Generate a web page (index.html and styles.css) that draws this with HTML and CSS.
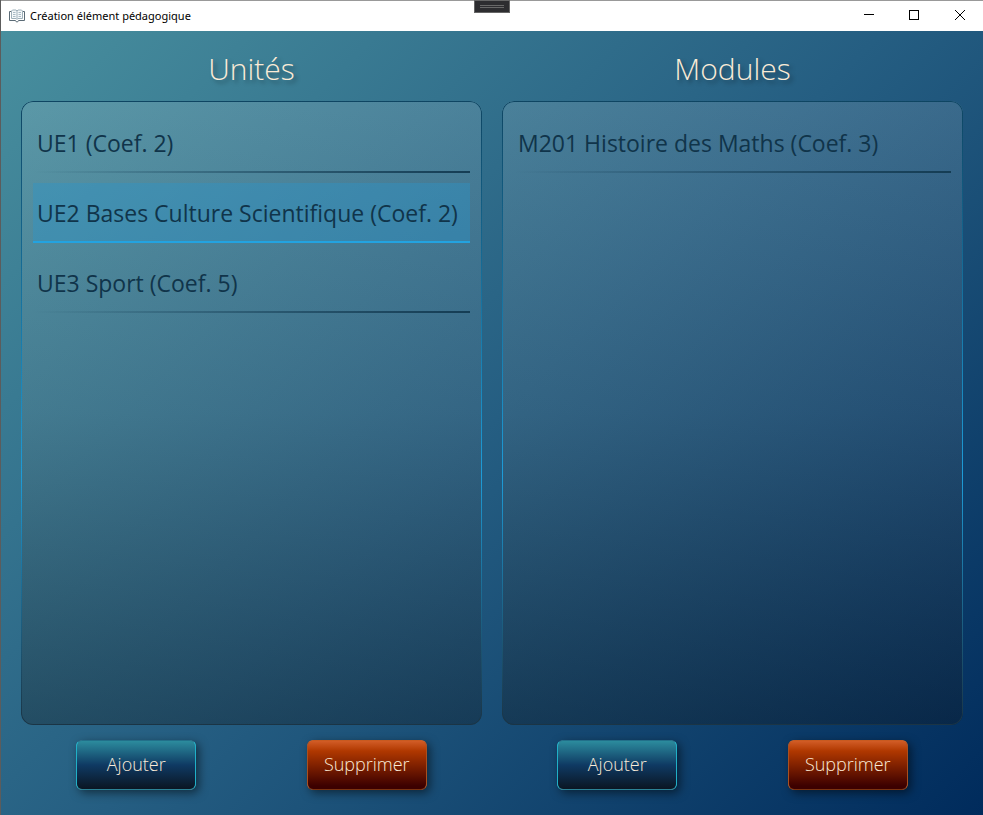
FILE: index.html
```html
<!DOCTYPE html>
<html lang="fr">
<head>
<meta charset="utf-8">
<title>Création élément pédagogique</title>
<link rel="stylesheet" href="styles.css">
</head>
<body>
<div class="window">
  <header class="titlebar">
    <svg class="app-icon" width="16" height="14" viewBox="0 0 16 14" fill="none" aria-hidden="true">
      <path d="M2.5 2.5H.5V11.500H6.500L7.500 13H8.500L9.500 11.500H15.500V2.500H13.500" stroke="#5b6b76"/>
      <path d="M8 2L7 1H3.500L2.500 2V9.500H7L8 10.500L9 9.500H13.500V2L12.500 1H9L8 2V10" stroke="#9fb0ba" fill="#f4f8fa"/>
      <path d="M4 3.500H6.500M4 5.500H6.500M4 7.500H6.500M9.500 3.500H12M9.500 5.500H12M9.500 7.500H12" stroke="#a9bac4"/>
    </svg>
    <span class="caption">Création élément pédagogique</span>
    <div class="window-controls">
      <button class="control" type="button" aria-label="Réduire"><svg width="12" height="12" viewBox="0 0 12 12" fill="none" stroke="#000"><path d="M2 5.500H12"/></svg></button>
      <button class="control" type="button" aria-label="Agrandir"><svg width="12" height="12" viewBox="0 0 12 12" fill="none" stroke="#000"><rect x="1.500" y="1.500" width="9" height="9"/></svg></button>
      <button class="control" type="button" aria-label="Fermer"><svg width="12" height="12" viewBox="0 0 12 12" fill="none" stroke="#000"><path d="M1 1L11 11M11 1L1 11"/></svg></button>
    </div>
    <div class="grip"></div>
  </header>
  <main class="content">
    <section class="column">
      <h1 class="heading">Unités</h1>
      <ul class="panel">
        <li class="item">UE1 (Coef. 2)</li>
        <li class="item selected">UE2 Bases Culture Scientifique (Coef. 2)</li>
        <li class="item">UE3 Sport (Coef. 5)</li>
      </ul>
      <div class="actions">
        <button class="action add" type="button">Ajouter</button>
        <button class="action remove" type="button">Supprimer</button>
      </div>
    </section>
    <section class="column">
      <h1 class="heading">Modules</h1>
      <ul class="panel">
        <li class="item">M201 Histoire des Maths (Coef. 3)</li>
      </ul>
      <div class="actions">
        <button class="action add" type="button">Ajouter</button>
        <button class="action remove" type="button">Supprimer</button>
      </div>
    </section>
  </main>
</div>
</body>
</html>
```
FILE: styles.css
```css
*,
*::before {
  box-sizing: border-box;
}

body {
  margin: 0;
  font-family: "Open Sans", "Noto Sans", sans-serif;
}

.window {
  display: flex;
  flex-direction: column;
  min-height: 100vh;
  border-left: 1px solid #5c5c5c;
}

.titlebar {
  position: relative;
  display: flex;
  align-items: center;
  height: 31px;
  padding-left: 8px;
  border-top: 1px solid #999;
  background: #fff;
}

.caption {
  margin-left: 5px;
  padding-bottom: 2px;
  font-family: "Noto Sans", sans-serif;
  font-size: 11px;
  color: #000;
}

.window-controls {
  display: flex;
  height: 100%;
  margin-left: auto;
}

.control {
  display: flex;
  align-items: center;
  justify-content: center;
  width: 46px;
  padding: 0 0 2px;
  border: 0;
  background: none;
}

.grip {
  position: absolute;
  top: -1px;
  left: calc(50% - 18px);
  width: 36px;
  height: 13px;
  padding: 4px 5px;
  border: 1px solid #666;
  background: #2d2d30;
}

.grip::before {
  content: "";
  display: block;
  height: 3px;
  border-top: 1px solid #686868;
  border-bottom: 1px solid #686868;
}

.content {
  flex: 1;
  display: grid;
  grid-template-columns: 1fr 1fr;
  gap: 20px;
  padding: 0 20px 25px;
  background: linear-gradient(135deg, #488f9e, #255e82 50%, #002b5c);
}

.column {
  display: flex;
  flex-direction: column;
}

.heading {
  height: 70px;
  margin: 0;
  font-size: 30px;
  font-weight: 300;
  line-height: 76px;
  text-align: center;
  color: #faebd7;
  text-shadow: 3px 3px 4px rgba(0, 0, 0, 0.35);
}

.panel {
  position: relative;
  flex: 1;
  margin: 0;
  padding: 12px;
  border-radius: 12px;
  background: linear-gradient(rgba(255, 255, 255, 0.12), rgba(136, 136, 136, 0.14) 50%, rgba(16, 16, 16, 0.3));
  list-style: none;
}

.panel::before {
  content: "";
  position: absolute;
  inset: 0;
  padding: 1px;
  border-radius: inherit;
  background: linear-gradient(#0e4562, #1e9cd8 60%, #1b3444);
  mask: linear-gradient(#000 0 0) content-box exclude, linear-gradient(#000 0 0);
  pointer-events: none;
}

.item {
  height: 60px;
  margin-bottom: 10px;
  padding-left: 4px;
  background: linear-gradient(to right, transparent, #153d54) bottom / 100% 2px no-repeat;
  font-size: 23px;
  line-height: 60px;
  color: #10344a;
}

.selected {
  background: linear-gradient(#23a3e0, #23a3e0) bottom / 100% 2px no-repeat, rgba(42, 150, 205, 0.38);
}

.actions {
  display: grid;
  grid-template-columns: 1fr 1fr;
  justify-items: center;
  margin-top: 15px;
}

.action {
  width: 120px;
  height: 50px;
  padding: 0 0 2px;
  border: 1px solid;
  border-radius: 6px;
  background-origin: border-box;
  box-shadow: 3px 3px 10px rgba(0, 0, 0, 0.5);
  font-family: inherit;
  font-size: 18px;
  font-weight: 300;
  color: #faebd7;
}

.add {
  border-color: #22708a #1fb0c8 #2b8296;
  background-image: linear-gradient(#2d8fa0, #0f3a63 50%, #0a1420);
}

.remove {
  border-color: #c85a20 #a85020 #7c3310;
  background-image: linear-gradient(#d5602a, #b03800 22%, #3c0000 92%);
}
```
